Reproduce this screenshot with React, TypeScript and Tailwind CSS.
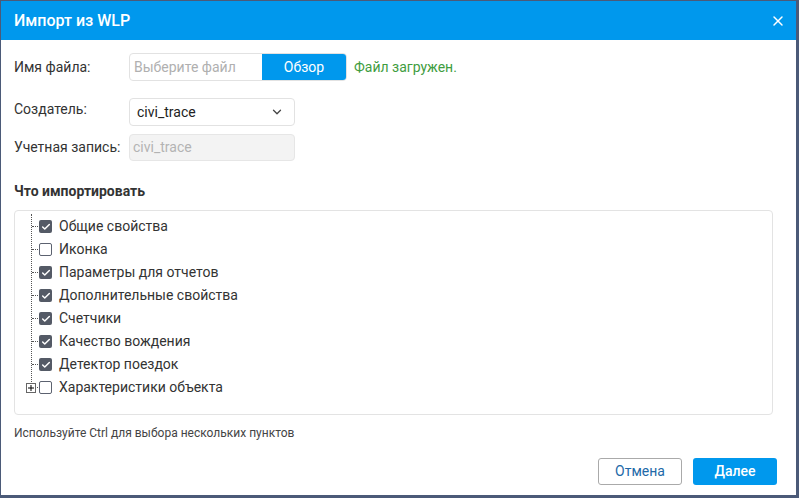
import { X, ChevronDown, Check } from "lucide-react";

const items = [
  { label: "Общие свойства", checked: true },
  { label: "Иконка", checked: false },
  { label: "Параметры для отчетов", checked: true },
  { label: "Дополнительные свойства", checked: true },
  { label: "Счетчики", checked: true },
  { label: "Качество вождения", checked: true },
  { label: "Детектор поездок", checked: true },
  { label: "Характеристики объекта", checked: false, expandable: true },
];

const Box = ({ checked }: { checked: boolean }) =>
  checked ? (
    <span className="block shrink-0 w-[13px] h-[13px] rounded-[2px] bg-[#545a66] flex items-center justify-center">
      <Check className="w-[10px] h-[10px] text-white" strokeWidth={3.5} />
    </span>
  ) : (
    <span className="block shrink-0 w-[13px] h-[13px] rounded-[2px] border border-[#5c6270] bg-white" />
  );

export default function App() {
  return (
    <div
      className="w-[799px] h-[498px] bg-[#4b5a78] pl-[1px] pt-[1px] overflow-hidden"
      style={{ fontFamily: "Roboto, 'Liberation Sans', sans-serif" }}
    >
      <div className="w-[795px] h-[494px] bg-white flex flex-col">
        {/* header */}
        <div className="h-[39px] bg-[#0098ed] flex items-center justify-between pl-[13px] pr-[10px]">
          <span className="text-white text-[16px] font-medium">Импорт из WLP</span>
          <X className="w-[16px] h-[16px] text-white" strokeWidth={2.2} />
        </div>

        <div className="flex-1 flex flex-col px-[13px] text-[14px] text-[#333]">
          {/* file row */}
          <div className="flex items-center mt-[13px] h-[28px]">
            <span className="w-[115px]">Имя файла:</span>
            <div className="flex h-[28px] w-[218px] border border-[#e2e2e2] rounded-[4px] overflow-hidden">
              <span className="flex-1 pl-[4px] flex items-center text-[#b0b0b0]">Выберите файл</span>
              <span className="w-[84px] bg-[#0098ed] text-white flex items-center justify-center">Обзор</span>
            </div>
            <span className="ml-[7px] text-[#3f9d3f]">Файл загружен.</span>
          </div>

          {/* creator */}
          <div className="flex items-start mt-[17px]">
            <span className="w-[115px] pt-[1px]">Создатель:</span>
            <div className="w-[166px] h-[28px] border border-[#e2e2e2] rounded-[4px] flex items-center justify-between pl-[7px] pr-[10px] text-[#222]">
              <span>civi_trace</span>
              <ChevronDown className="w-[14px] h-[14px] text-[#444]" strokeWidth={2.2} />
            </div>
          </div>

          {/* account */}
          <div className="flex items-center mt-[8px]">
            <span className="w-[115px]">Учетная запись:</span>
            <div className="w-[166px] h-[27px] border border-[#e6e6e6] bg-[#f3f3f3] rounded-[4px] flex items-center pl-[3px] text-[#b3b3b3]">
              civi_trace
            </div>
          </div>

          <div className="mt-[20px] font-bold text-[#333]">Что импортировать</div>

          {/* tree */}
          <div className="mt-[8px] h-[205px] w-[759px] border border-[#e3e3e3] rounded-[4px] relative pt-[4px]">
            <div className="absolute left-[16px] top-[3px] h-[174px] border-l border-dotted border-[#555]" />
            {items.map((it) => (
              <div key={it.label} className="h-[23px] flex items-center relative">
                <span className="absolute left-[17px] w-[8px] border-t border-dotted border-[#555]" />
                {it.expandable && (
                  <span className="absolute left-[11px] w-[10px] h-[10px] border border-[#666] bg-white flex items-center justify-center">
                    <svg width="6" height="6" viewBox="0 0 6 6">
                      <path d="M0 3H6M3 0V6" stroke="#000" strokeWidth="1" />
                    </svg>
                  </span>
                )}
                <span className="ml-[24px] relative">
                  <Box checked={it.checked} />
                </span>
                <span className="ml-[7px] text-[#333]">{it.label}</span>
              </div>
            ))}
          </div>

          <div className="mt-[9px] text-[12px] text-[#444]">Используйте Ctrl для выбора нескольких пунктов</div>

          <div className="flex justify-end gap-[11px] mt-[16px] pr-[6px]">
            <button className="w-[84px] h-[27px] border border-[#aaa] rounded-[3px] text-[#2269a8] text-[14px] bg-white">
              Отмена
            </button>
            <button className="w-[84px] h-[27px] rounded-[3px] bg-[#0098ed] text-white text-[14px] font-medium">
              Далее
            </button>
          </div>
        </div>
      </div>
    </div>
  );
}
